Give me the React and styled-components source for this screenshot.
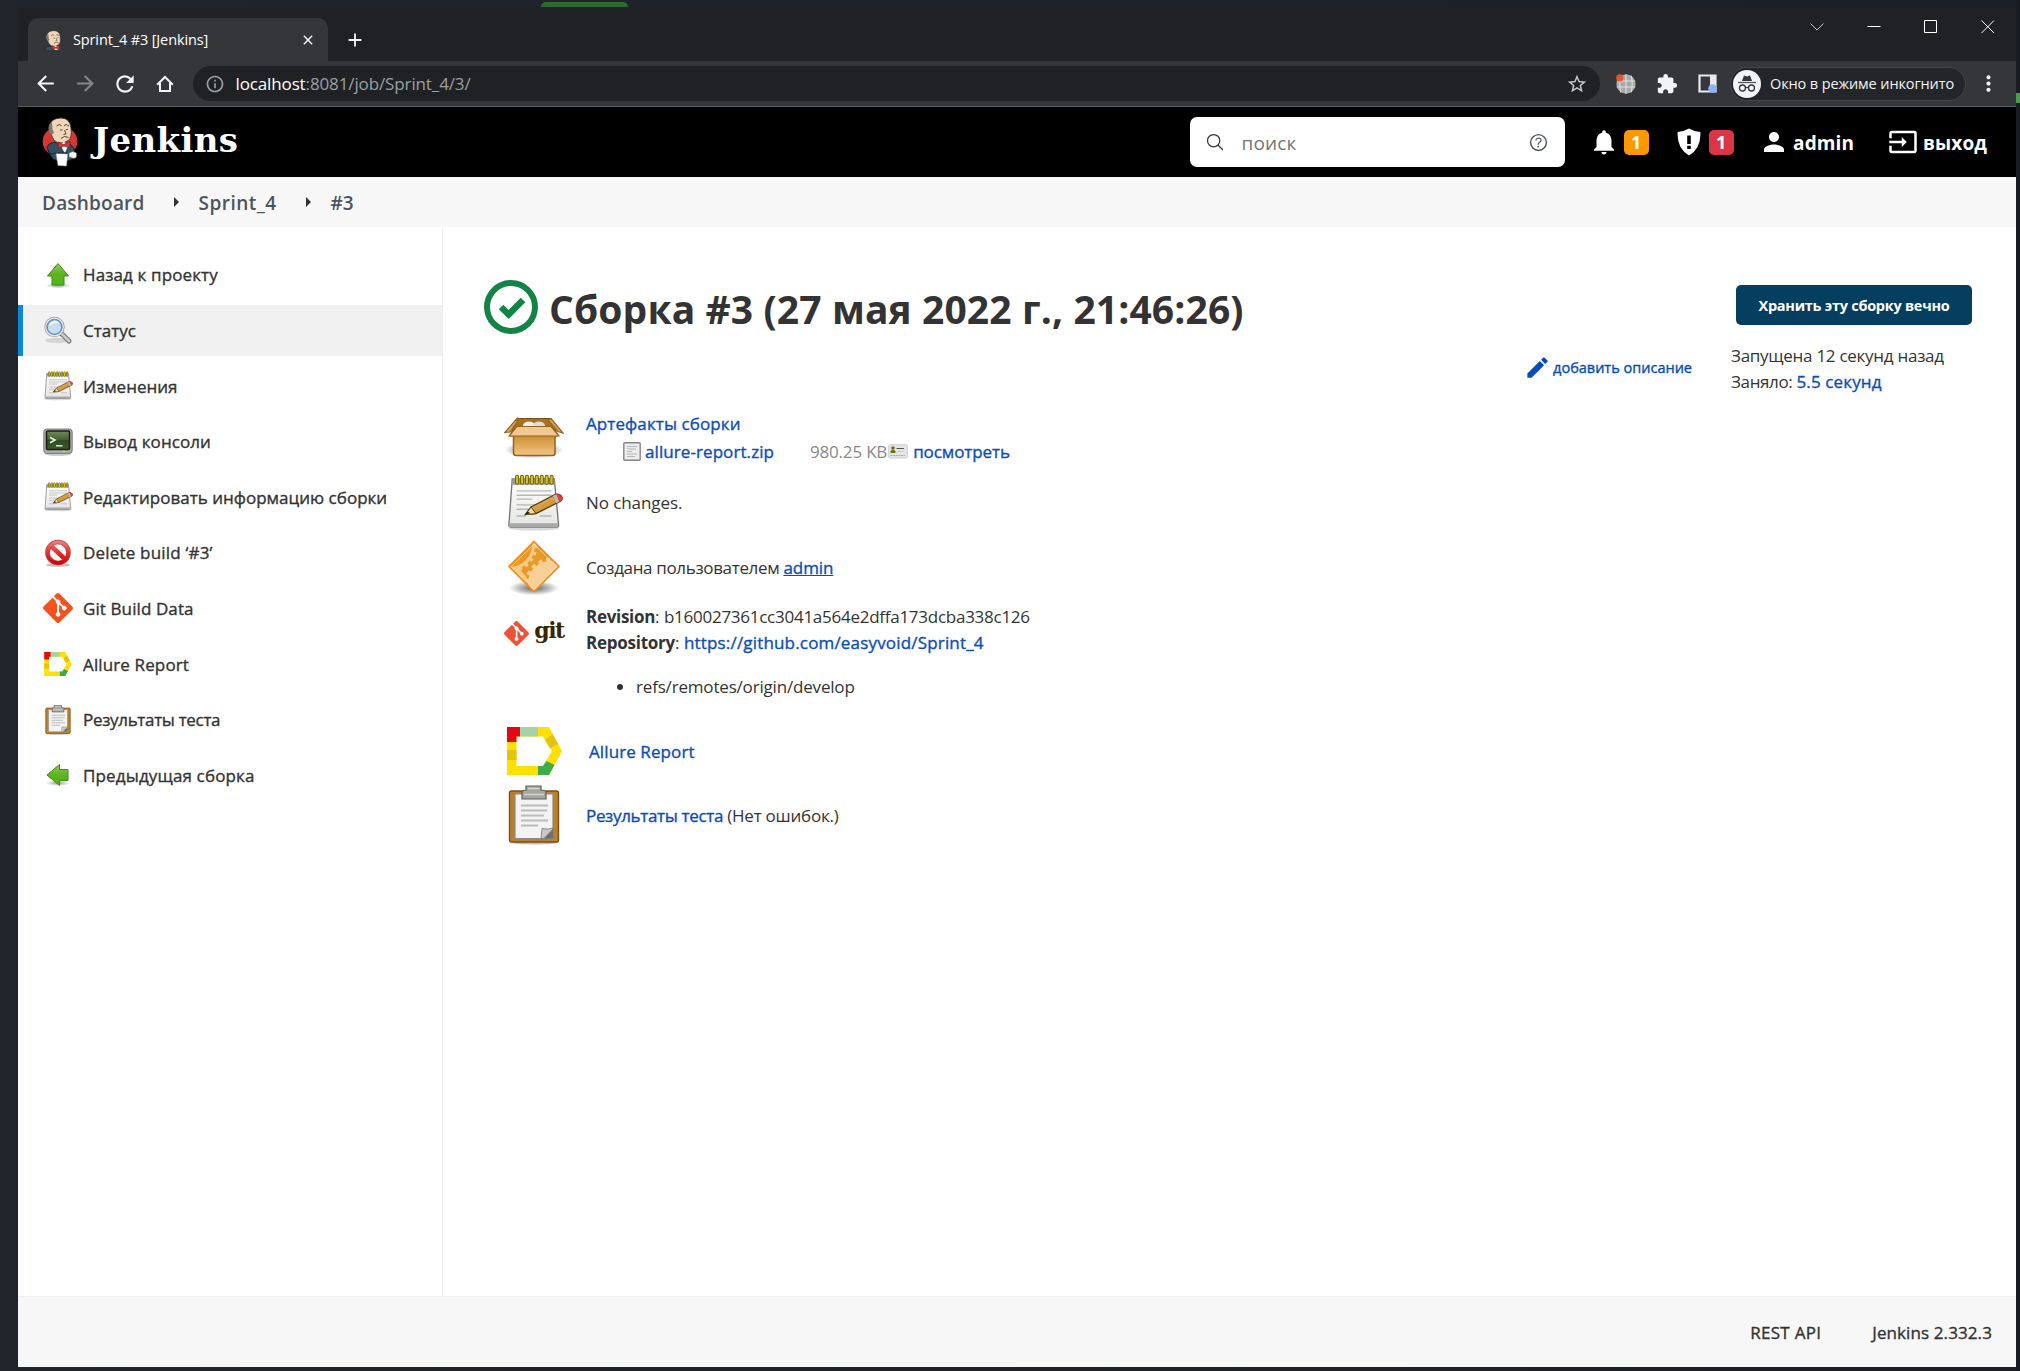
import React from "react";
import styled, { createGlobalStyle } from "styled-components";
import {
  MdArrowBack, MdArrowForward, MdRefresh, MdInfoOutline, MdStarBorder, MdExtension,
  MdMoreVert, MdNotifications, MdPerson, MdInput, MdEdit, MdClose, MdAdd,
} from "react-icons/md";
import { IoSearchOutline, IoHelpCircleOutline } from "react-icons/io5";
import { SiGit } from "react-icons/si";

const Global = createGlobalStyle`
  * { box-sizing: border-box; }
  body { margin: 0; background: #22272f; font-family: "Open Sans", "Noto Sans", sans-serif; }
  svg { display: block; flex: none; }
`;

const T = styled.span`
  white-space: pre;
  font-size: ${(p) => p.$s || 17}px;
  font-weight: ${(p) => p.$b || 400};
  color: ${(p) => p.$c || "inherit"};
  letter-spacing: ${(p) => p.$ls || 0}px;
  -webkit-text-stroke: ${(p) => (p.$b === 500 ? "0.35px" : "0")} currentColor;
`;

const Desktop = styled.div`
  width: 2020px;
  height: 1371px;
  padding: 8px 4px 4px 18px;
  background: linear-gradient(90deg, #22272f 0, #20242b 18px, #1c2026 2016px, #16191e 100%);
  overflow: hidden;
  position: relative;
`;
const TopSliver = styled.div`
  position: absolute; left: 541px; top: 2px; width: 87px; height: 5px;
  background: #2c6a31; border-radius: 8px 8px 0 0;
`;
const SideSliver = styled.div`
  position: absolute; right: 0; top: 93px; width: 4px; height: 10px; background: #4c9a4f;
`;
const Window = styled.div`
  width: 1998px; height: 1359px; display: flex; flex-direction: column; background: #fff;
`;
const TabStrip = styled.div`
  height: 53px; background: #202124; display: flex; padding: 10px 0 0 10px; color: #f1f3f4;
`;
const Tab = styled.div`
  width: 300px; height: 43px; background: #35363a; border-radius: 10px 10px 0 0;
  display: flex; align-items: center; padding: 0 12px 0 16px; gap: 11px; color: #fff;
  & > span { flex: 1; }
`;
const NewTab = styled.div`
  width: 54px; display: flex; align-items: center; justify-content: center;
`;
const WindowControls = styled.div`
  margin-left: auto; display: flex; align-items: flex-start; gap: 43px; padding: 2px 21px 0 0;
`;
const Toolbar = styled.div`
  height: 46px; background: #35363a; border-bottom: 1px solid #5a5b5e; display: flex;
  align-items: center; padding: 0 14px 0 15px; color: #f1f3f4;
`;
const NavButton = styled.div`
  width: ${(p) => p.$w || 40}px; display: flex; justify-content: ${(p) => (p.$w ? "flex-start" : "center")};
  color: ${(p) => (p.$dim ? "#85868a" : "#f1f3f4")};
`;
const Omnibox = styled.div`
  width: 1407px; height: 35px; border-radius: 18px; background: #202124; display: flex;
  align-items: center; padding: 0 12px; margin-left: 8px; color: #9aa0a6;
`;
const Url = styled.div`flex: 1; margin-left: 10.5px; padding-bottom: 1px;`;
const Extensions = styled.div`
  display: flex; align-items: center; gap: 20px; padding: 0 13px 0 16px;
`;
const Incognito = styled.div`
  width: 236px; height: 34px; border-radius: 17px; border: 1px solid #45464a; background: #242528; flex: none;
  display: flex; align-items: center; padding-left: 2px; gap: 9px; margin-right: 10px;
  & > span { padding-bottom: 1px; }
`;

const Header = styled.header`
  height: 70px; background: #000; color: #fff; display: flex; align-items: center; padding: 0 29px 0 24px;
`;
const Brand = styled.div`
  display: flex; align-items: center; gap: 15px; flex: 1;
`;
const BrandName = styled.span`
  font-family: "DejaVu Serif", serif; font-weight: 700; font-size: 34px; letter-spacing: 0.35px;
  line-height: 60px; padding-bottom: 4px;
`;
const Search = styled.div`
  width: 375px; height: 50px; border-radius: 7px; background: #fff; display: flex; align-items: center;
  padding: 0 14.5px 0 15px; margin-right: 24px; color: #333;
  & > span { flex: 1; margin-left: 17px; padding-top: 2px; }
`;
const HeaderItem = styled.div`
  display: flex; align-items: center; gap: ${(p) => p.$gap || 0}px; margin-right: ${(p) => p.$mr || 0}px;
  & > span:last-child:not(:first-child) { line-height: 25px; }
`;
const HeaderLabel = styled(T)`padding-top: 2px;`;
const Badge = styled.span`
  width: 25px; height: 25px; border-radius: 5px; background: ${(p) => p.$bg}; font-size: 18px; font-weight: 700;
  display: flex; align-items: center; justify-content: center;
`;

const Crumbs = styled.nav`
  height: 50px; background: #f7f7f7; display: flex; align-items: center; padding: 2px 0 0 24px; color: #4d545d;
`;
const CrumbArrow = styled.i`
  border: 5px solid transparent; border-left-color: #333; border-right: 0; margin: 0 20px 2px 29px;
`;

const Body = styled.div`flex: 1; display: flex; min-height: 0;`;
const Side = styled.aside`
  width: 425px; border-right: 1px solid #efefef; padding-top: 22.4px; display: flex; flex-direction: column; gap: 4.6px;
`;
const Task = styled.a`
  height: 51px; display: flex; align-items: center; gap: 10px; color: #333;
  padding-left: ${(p) => (p.$active ? 20 : 25)}px;
  border-left: ${(p) => (p.$active ? "5px solid #0b88d5" : "0")};
  background: ${(p) => (p.$active ? "#f1f1f1" : "transparent")};
`;
const TaskIcon = styled.span`width: 30px; flex: none; display: flex; justify-content: center;`;
const Main = styled.main`flex: 1; color: #333;`;
const MainHead = styled.div`height: 178px; display: flex; padding: 49px 44px 0 41px;`;
const TitleRow = styled.h1`
  margin: 0; height: 62px; display: flex; align-items: center; gap: 11px; flex: 1; font-size: 40px;
  & > span { padding-top: 2px; }
`;
const AddDescription = styled.a`
  color: #004db8; display: flex; align-items: center; gap: 2px; height: 30px; margin: 76px 39px 0 0;
`;
const BuildInfo = styled.div`width: 241px; padding-top: 9px; display: flex; flex-direction: column;`;
const KeepButton = styled.button`
  align-self: flex-end; margin: 0 0 18px; width: 236px; height: 40px; border: 0; border-radius: 5px; background: #063e60;
  color: #fff; font-family: inherit; padding: 0;
`;
const Line = styled.div`
  height: ${(p) => p.$h || 26.2}px; line-height: ${(p) => p.$h || 26.2}px; display: flex; align-items: center;
  margin: ${(p) => p.$mt || 0}px 0 0 ${(p) => p.$ml || 0}px;
`;
const Summary = styled.div`padding-left: 61px;`;
const SummaryRow = styled.div`
  height: ${(p) => p.$h}px; display: flex; align-items: ${(p) => (p.$top ? "flex-start" : "center")};
`;
const SummaryIcon = styled.div`
  width: 60px; height: 66px; margin-right: 22px; display: flex; align-items: center; justify-content: center;
`;
const SummaryText = styled.div`padding: ${(p) => p.$pt || 0}px 0 0 ${(p) => p.$pl || 0}px;`;
const Bullet = styled.i`width: 6px; height: 6px; border-radius: 50%; background: #333; margin-right: 13px;`;
const GitWord = styled.span`
  font-family: "DejaVu Serif", serif; font-weight: 700; font-size: 22px; letter-spacing: -1.5px; color: #362701;
  line-height: 30px; margin-top: -7px;
`;
const GitLogo = styled.div`display: flex; align-items: center; gap: 5px; color: #f05033;`;
const Gap = styled.span`width: ${(p) => p.$w}px; flex: none;`;
const Footer = styled.footer`
  height: 71px; border-top: 1px solid #efefef; background: #f7f7f7; display: flex; align-items: center;
  justify-content: flex-end; gap: 51px; padding: 1px 24px 0 0; color: #333;
`;

function Butler({ w, h, box = "0 0 36 50", disc = true }) {
  return (
    <svg width={w} height={h} viewBox={box}>
      {disc && <ellipse cx="18" cy="24.500" rx="17.300" ry="15.500" fill="#d33833" />}
      <path d="M5 30 Q7 25 14 25.500 L24 26 Q30 27 32.500 32 L31 42 Q20 47 11 42 Q6 36 5 30Z" fill="#335061" stroke="#101820" strokeWidth=".8" />
      <path d="M7 11 Q8 1 19 1 Q28 1 29 11 Q30 20 27 23 Q22 27 16 26 Q11 24 9.500 18Z" fill="#efd6b8" stroke="#3a2c22" strokeWidth=".8" />
      <path d="M6.500 11 Q7 6 10 6 L10.500 12 L12 16 L9 18 Q6.500 15 6.500 11Z" fill="#7d7a78" />
      <path d="M14.500 9 Q17 6.500 19.500 8.500 M22 8.500 Q24.500 6.500 27 9 M18 13h2.500 M24 12.500h2 M22.500 13 L24 17 L21.500 17.500 M19 21.500 Q22 18 26.500 20.500" fill="none" stroke="#49352a" strokeWidth=".9" />
      <path d="M18 27 L21 33 L23 36 L27 27 L22 25Z" fill="#eef2f4" />
      <path d="M16 25 L21.500 27.500 L28 24.500 L28 31 L22 29 L16.500 31.500Z" fill="#d33833" stroke="#4f1010" strokeWidth=".5" />
      <path d="M14 36 L25.500 37 L24.500 49 L16 48.500Z" fill="#fff" stroke="#aaa" strokeWidth=".5" />
      <path d="M27 36 Q31 33 34.500 36 Q35.500 41 32 41.500 L27 40Z" fill="#f4f4f4" stroke="#555" strokeWidth=".6" />
      <path d="M6 33 Q8 39 13 36 L25 36" fill="none" stroke="#14222b" strokeWidth="1" />
    </svg>
  );
}

function GreenArrow({ left }) {
  return (
    <svg width="30" height="30" viewBox="0 0 30 30">
      <defs>
        <linearGradient id="ga" x1="0" y1="0" x2="0" y2="1">
          <stop offset="0" stopColor="#8ccb55" /><stop offset=".5" stopColor="#5fb21f" /><stop offset="1" stopColor="#4cb80d" />
        </linearGradient>
        <radialGradient id="gs"><stop offset="0" stopColor="#000" stopOpacity=".4" /><stop offset="1" stopColor="#000" stopOpacity="0" /></radialGradient>
      </defs>
      <ellipse cx="15" cy={left ? 23 : 25.500} rx="12" ry="3" fill="url(#gs)" />
      <path d={left ? "M4 15 L16.500 4.500 V9.500 H25 V20.500 H16.500 V25.500Z" : "M15 3.500 L25.500 16 H21 V25 H9 V16 H4.500Z"} fill="url(#ga)" stroke="#3f8a1c" strokeWidth="1" />
    </svg>
  );
}

function Magnifier() {
  return (
    <svg width="30" height="30" viewBox="0 0 30 30">
      <ellipse cx="14" cy="25.500" rx="12" ry="2.500" fill="#000" opacity=".12" />
      <path d="M18.500 18.500 L26 26" stroke="#6f6f6f" strokeWidth="5" strokeLinecap="round" />
      <path d="M18.500 18.500 L26 26" stroke="#c9c9c9" strokeWidth="3" strokeLinecap="round" />
      <circle cx="11.500" cy="12" r="9" fill="#c7dcf2" stroke="#9a9a9a" strokeWidth="2.400" />
      <circle cx="11.500" cy="12" r="8.800" fill="none" stroke="#ececec" strokeWidth="1.200" />
      <circle cx="11.500" cy="12" r="7.300" fill="none" stroke="#5f8ac4" strokeWidth="1.300" />
      <path d="M6 11 A6 6 0 0 1 16 7.500 Q9 8 6 11Z" fill="#fff" opacity=".8" />
    </svg>
  );
}

function Notepad({ size }) {
  return (
    <svg width={size} height={size} viewBox="0 0 60 60">
      <defs>
        <linearGradient id="np" x1="0" y1="0" x2="0" y2="1"><stop offset="0" stopColor="#fff" /><stop offset="1" stopColor="#e4e4e2" /></linearGradient>
        <linearGradient id="pc" x1="0" y1="0" x2="1" y2="1"><stop offset="0" stopColor="#f0c870" /><stop offset="1" stopColor="#b87518" /></linearGradient>
      </defs>
      <ellipse cx="30" cy="56.500" rx="26" ry="2" fill="#000" opacity=".15" />
      <path d="M7.500 5 H51 L55.500 53 Q55.500 55 53.500 55 H5.500 Q4 55 4 53Z" fill="url(#np)" stroke="#777" strokeWidth="1.400" />
      <path d="M5 51 H55 L55 54.500 H4.500Z" fill="#a9a9a9" />
      <path d="M8 5 H51 L51.500 11 H7.500Z" fill="#9b9b98" />
      <path d="M12 17.500H48M12 22H48M12 26H28M12 32H44M12 36.500H36M12 43.500H22M36 43.500H48" stroke="#b5b5b5" strokeWidth="1.400" />
      <path d="M12.500 3v6M17.600 3v6M22.700 3v6M27.800 3v6M32.900 3v6M38 3v6M43.100 3v6M48.200 3v6" stroke="#6b6000" strokeWidth="4.200" strokeLinecap="round" />
      <path d="M12.500 3v6M17.600 3v6M22.700 3v6M27.800 3v6M32.900 3v6M38 3v6M43.100 3v6M48.200 3v6" stroke="#d5c02c" strokeWidth="2.300" strokeLinecap="round" />
      <path d="M21 42 L27 34 L52 21 Q57 20 59 24 Q60 27 57 28.500 L32 41Z" fill="url(#pc)" stroke="#4e3a12" strokeWidth="1.300" />
      <path d="M21 42 L27 34 L32 41Z" fill="#efd9a5" stroke="#4e3a12" strokeWidth="1" />
      <path d="M21 42 L23.500 38.500 L26 40.500Z" fill="#222" />
      <path d="M53 21 Q57 20 59 24 Q60 27 57 28.500 L55.500 29Z" fill="#ea3b3b" />
      <path d="M50 22.200 L53 21 L56 28.800 L53 30.300Z" fill="#b9b9b9" />
    </svg>
  );
}

function Terminal() {
  return (
    <svg width="30" height="30" viewBox="0 0 30 30">
      <defs><linearGradient id="tm" x1="0" y1="0" x2="0" y2="1"><stop offset="0" stopColor="#6f8a5c" /><stop offset=".45" stopColor="#4a6338" /><stop offset=".5" stopColor="#2f4a20" /><stop offset="1" stopColor="#3c5a2a" /></linearGradient></defs>
      <ellipse cx="15" cy="27" rx="13" ry="2" fill="#000" opacity=".2" />
      <rect x=".8" y="2" width="28.400" height="24.500" rx="3" fill="#a8aaa6" stroke="#7c7e7a" />
      <rect x="3.500" y="4" width="23" height="18.500" rx="1" fill="url(#tm)" stroke="#1b1f18" strokeWidth="1.500" />
      <path d="M7 10.500 L12 13 L7 15.700" fill="none" stroke="#d8f5d8" strokeWidth="1.600" />
      <path d="M13 18.800h6.500" stroke="#d8f5d8" strokeWidth="1.400" />
      <circle cx="21" cy="24.300" r="1" fill="#9be05a" />
    </svg>
  );
}

function Forbidden() {
  return (
    <svg width="30" height="30" viewBox="0 0 30 30">
      <defs><linearGradient id="fb" gradientUnits="userSpaceOnUse" x1="0" y1="2" x2="0" y2="27"><stop offset="0" stopColor="#e88" /><stop offset=".5" stopColor="#d33" /><stop offset="1" stopColor="#c00" /></linearGradient></defs>
      <ellipse cx="15" cy="27" rx="12" ry="1.800" fill="#000" opacity=".25" />
      <circle cx="15" cy="14.500" r="10.500" fill="#f6f6f6" />
      <path d="M7.500 7.500 L22.500 21.500" stroke="url(#fb)" strokeWidth="4.500" />
      <circle cx="15" cy="14.500" r="10.500" fill="none" stroke="#c23a3a" strokeWidth="4.600" />
      <circle cx="15" cy="14.500" r="10.500" fill="none" stroke="url(#fb)" strokeWidth="3.200" />
    </svg>
  );
}

function Allure({ w, h }) {
  return (
    <svg width={w} height={h} viewBox="0 0 55 48">
      <path d="M0 0 H42 L55 24 L42 48 H0Z M9.500 9.500 V39 H36 L45 24 L36 9.500Z" fillRule="evenodd" fill="#ffe000" />
      <path d="M0 0 H13 V9.500 H9.500 V15 H0Z" fill="#e30613" />
      <path d="M13 0H31V9.500H13Z" fill="#a8d2a5" />
      <path d="M0 23H9.500V33H0Z M38 13 L45.500 7.500 L51 17 L43 21.500Z" fill="#e0c40f" />
      <path d="M31 48 V39 H36 L39.500 34 L47.500 38 L42 48Z" fill="#3eab48" />
    </svg>
  );
}

function Clipboard({ w, h }) {
  return (
    <svg width={w} height={h} viewBox="0 0 52 60">
      <ellipse cx="26" cy="57.500" rx="24" ry="2" fill="#000" opacity=".25" />
      <rect x="1.500" y="6" width="49" height="51" rx="2" fill="#b9802e" stroke="#7a5114" strokeWidth="1.400" />
      <path d="M7 9 H45 V53.500 H7Z" fill="#f3f3f3" stroke="#8b8b8b" strokeWidth="1.200" />
      <path d="M13 20.500H40M13 25.500H39M13 30.500H36M13 35.500H40M13 40.500H30" stroke="#bcbcbc" strokeWidth="2" />
      <path d="M33 53.500 L34 43.500 Q40 45 45 43 V44 L36 53.500Z" fill="#c8cac6" stroke="#777" strokeWidth=".8" />
      <path d="M45 44 V53.500 H36Z" fill="#6f716d" />
      <path d="M14 14 V8 Q14 5 18 5 V1 H33 V5 Q38 5 38 8 V14Z" fill="#a5a79f" stroke="#5e605b" strokeWidth="1.200" />
      <path d="M20 3.500 H31.500 M16 9.500 H36" stroke="#d3d5cf" strokeWidth="1.600" />
    </svg>
  );
}

function Box() {
  return (
    <svg width="60" height="42" viewBox="0 0 60 42">
      <defs>
        <linearGradient id="bx" x1="0" y1="0" x2="0" y2="1"><stop offset="0" stopColor="#c98f35" /><stop offset=".5" stopColor="#dfa95b" /><stop offset="1" stopColor="#f0c58a" /></linearGradient>
        <radialGradient id="bs"><stop offset=".6" stopColor="#000" stopOpacity=".3" /><stop offset="1" stopColor="#000" stopOpacity="0" /></radialGradient>
      </defs>
      <ellipse cx="30" cy="33" rx="29" ry="8.500" fill="url(#bs)" />
      <path d="M13 1.500 H47 L54 19 H6Z" fill="#a8701e" stroke="#7d4f12" />
      <ellipse cx="25" cy="8.500" rx="6" ry="4" fill="#eee" /><ellipse cx="35" cy="8.500" rx="6" ry="4" fill="#ddd" />
      <path d="M9.500 18 H51 V36 Q51 38.500 48.500 38.500 H12 Q9.500 38.500 9.500 36Z" fill="url(#bx)" stroke="#96631c" strokeWidth="1.500" />
      <path d="M13 9.500 H47 L55 19 H5Z" fill="#f1c88f" stroke="#96631c" strokeWidth="1.200" />
      <path d="M13 1.500 L.800 15.500 L6 15 L13 5Z M47 1.500 L59 16 L54 14.500 L44 3Z" fill="#dca65a" stroke="#96631c" strokeWidth="1.200" />
    </svg>
  );
}

function GearDiamond() {
  return (
    <svg width="54" height="56" viewBox="0 0 54 56">
      <defs>
        <linearGradient id="gd" x1="0" y1="0" x2="1" y2="1"><stop offset="0" stopColor="#f0a93a" /><stop offset="1" stopColor="#e29422" /></linearGradient>
        <radialGradient id="gdS"><stop offset=".2" stopColor="#000" stopOpacity=".5" /><stop offset="1" stopColor="#000" stopOpacity="0" /></radialGradient>
        <clipPath id="gdC"><path d="M27 1.500 L52 26.500 L27 51.500 L2 26.500Z" /></clipPath>
      </defs>
      <ellipse cx="27" cy="48" rx="25" ry="7.500" fill="url(#gdS)" />
      <path d="M27 1.500 L52 26.500 L27 51.500 L2 26.500Z" fill="#e79a28" />
      <g clipPath="url(#gdC)">
        <circle cx="3" cy="5" r="23.500" fill="none" stroke="#f6c987" strokeWidth="3" />
        <circle cx="3" cy="5" r="26" fill="none" stroke="#f6c987" strokeWidth="3" strokeDasharray="3.500 3.500" />
        <path d="M2 26 L12 28 L20 38 L16 44Z" fill="#f6c987" />
        <circle cx="43" cy="43" r="22" fill="#f8cf95" />
        <circle cx="43" cy="43" r="23" fill="none" stroke="#f8cf95" strokeWidth="4" strokeDasharray="4 4" />
      </g>
      <path d="M27 1.500 L52 26.500 L27 51.500 L2 26.500Z" fill="none" stroke="#f58a1c" strokeWidth="1.600" />
      <path d="M27 4 L49.500 26.500 L27 49 L4.500 26.500Z" fill="none" stroke="#fce0b4" strokeWidth="1" opacity=".7" />
    </svg>
  );
}

const FileIcon = () => (
  <svg width="18" height="19" viewBox="0 0 18 19">
    <rect x=".8" y=".8" width="16.400" height="17.400" rx="1" fill="#ededed" stroke="#858585" strokeWidth="1.400" />
    <path d="M4 4.500H14M4 7H13M4 9.500H9M4 12H14M4 14.500H12" stroke="#b5b5b5" />
  </svg>
);
const CardIcon = () => (
  <svg width="20" height="15" viewBox="0 0 20 15">
    <rect x=".7" y=".7" width="18.600" height="13.300" rx="1" fill="#e6e6e6" stroke="#cfcfcf" />
    <circle cx="5" cy="4" r="1.800" fill="#8a5a20" /><path d="M2.500 9V7Q5 4.500 7.500 7V9Z" fill="#5c7a1a" />
    <path d="M8.500 4.500H16" stroke="#555" /><path d="M9 7.500H16" stroke="#ccc" /><path d="M2.500 11.500H17" stroke="#aaa" strokeDasharray="2 .6" />
  </svg>
);
const CheckCircle = () => (
  <svg width="54" height="54" viewBox="0 0 54 54">
    <circle cx="27" cy="27" r="24" fill="none" stroke="#138347" strokeWidth="6" />
    <path d="M17 27 L24.700 34.500 L39 20" fill="none" stroke="#138347" strokeWidth="6.500" />
  </svg>
);
const Shield = () => (
  <svg width="24" height="28" viewBox="0 0 24 28">
    <path d="M12 .5 Q17 3.500 23.300 4 Q24.500 20 12 27.500 Q-.5 20 .7 4 Q7 3.500 12 .5Z" fill="#fff" />
    <path d="M10.200 7.500h3.600v8.500h-3.600z M10.200 17.800h3.600v3.200h-3.600z" fill="#000" />
  </svg>
);
const HomeIcon = () => (
  <svg width="18" height="18" viewBox="0 0 18 18">
    <path d="M1.200 9.800 L9 2 L16.800 9.800 M4 8 V16 H14 V8" fill="none" stroke="#f1f3f4" strokeWidth="2" />
  </svg>
);
const GlobeIcon = () => (
  <svg width="20" height="20" viewBox="0 0 20 20">
    <circle cx="10" cy="10" r="9.700" fill="#a8a8a8" />
    <path d="M.8 7H19.200M.8 13H19.200M10 .3V19.700M5 1.500Q2.500 10 5 18.500M15 1.500Q17.500 10 15 18.500" fill="none" stroke="#dedede" strokeWidth="1.100" />
    <circle cx="3.800" cy="3.800" r="3.600" fill="#e0592a" />
  </svg>
);
const PanelIcon = () => (
  <svg width="19" height="19" viewBox="0 0 19 19">
    <path d="M1.500 1.500H17.500V17.500H1.500Z" fill="none" stroke="#e8eaed" strokeWidth="2.200" />
    <path d="M12 1H18V12H12Z" fill="#e8eaed" />
    <circle cx="14.500" cy="14.500" r="4.300" fill="#8ab4f8" />
  </svg>
);
const SpyIcon = () => (
  <svg width="28" height="28" viewBox="0 0 28 28">
    <circle cx="14" cy="14" r="14" fill="#f1f3f4" />
    <path d="M9 11 L11 5.500 L14 6.500 L17 5.500 L19 11Z" fill="#35363a" />
    <path d="M5 12.500H23" stroke="#55565a" strokeWidth="1.300" />
    <circle cx="9.500" cy="18" r="3" fill="none" stroke="#35363a" strokeWidth="1.300" /><circle cx="18.500" cy="18" r="3" fill="none" stroke="#35363a" strokeWidth="1.300" />
    <path d="M12.500 17.800Q14 16.800 15.500 17.800" fill="none" stroke="#35363a" strokeWidth="1.200" />
  </svg>
);
const Controls = () => (
  <WindowControls>
    <svg width="14" height="14" viewBox="0 0 14 14"><path d="M.5 3.500 L7 10 L13.500 3.500" fill="none" stroke="#c8c8c8" /></svg>
    <svg width="14" height="14" viewBox="0 0 14 14"><path d="M.5 6.500H13.500" stroke="#fff" /></svg>
    <svg width="14" height="14" viewBox="0 0 14 14"><path d="M.5 .5H12.500V12.500H.5Z" fill="none" stroke="#fff" /></svg>
    <svg width="14" height="14" viewBox="0 0 14 14"><path d="M.5 .5L13 13M13 .5L.5 13" stroke="#fff" /></svg>
  </WindowControls>
);

const TASKS = [
  ["Назад к проекту", <GreenArrow />, 0.12],
  ["Статус", <Magnifier />, 0],
  ["Изменения", <Notepad size={30} />, 0],
  ["Вывод консоли", <Terminal />, 0.085],
  ["Редактировать информацию сборки", <Notepad size={30} />, 0.02],
  ["Delete build ‘#3’", <Forbidden />, 0.19],
  ["Git Build Data", <SiGit size={30} color="#f4511e" />, 0.1],
  ["Allure Report", <Allure w={28} h={24} />, 0.127],
  ["Результаты теста", <Clipboard w={30} h={30} />, -0.32],
  ["Предыдущая сборка", <GreenArrow left />, 0.15],
];

const BLUE = "#0b4db8";

export default function App() {
  return (
    <Desktop>
      <Global />
      <TopSliver />
      <SideSliver />
      <Window>
        <TabStrip>
          <Tab>
            <Butler w={18} h={20} box="4 0 27 32" disc={false} />
            <T $s={14.5} $ls={-0.13}>Sprint_4 #3 [Jenkins]</T>
            <MdClose size={16} />
          </Tab>
          <NewTab><MdAdd size={22} /></NewTab>
          <Controls />
        </TabStrip>
        <Toolbar>
          <NavButton $w={32}><MdArrowBack size={25} /></NavButton>
          <NavButton $dim><MdArrowForward size={25} /></NavButton>
          <NavButton><MdRefresh size={26} /></NavButton>
          <NavButton><HomeIcon /></NavButton>
          <Omnibox>
            <MdInfoOutline size={20} />
            <Url><T $c="#fff" $ls={-0.13}>localhost</T><T $ls={-0.12}>:8081/job/Sprint_4/3/</T></Url>
            <MdStarBorder size={22} color="#c8cacd" />
          </Omnibox>
          <Extensions><GlobeIcon /><MdExtension size={22} /><PanelIcon /></Extensions>
          <Incognito><SpyIcon /><T $s={14.5} $ls={-0.12}>Окно в режиме инкогнито</T></Incognito>
          <MdMoreVert size={25} />
        </Toolbar>
        <Header>
          <Brand><Butler w={36} h={50} /><BrandName>Jenkins</BrandName></Brand>
          <Search>
            <IoSearchOutline size={20} />
            <T $s={19} $c="#757575" $ls={0.15}>поиск</T>
            <IoHelpCircleOutline size={23} color="#4d545d" />
          </Search>
          <HeaderItem $gap={5} $mr={28}><MdNotifications size={30} color="#fff" /><Badge $bg="#ff9800">1</Badge></HeaderItem>
          <HeaderItem $gap={8} $mr={25.5}><Shield /><Badge $bg="#dc3545">1</Badge></HeaderItem>
          <HeaderItem $gap={4} $mr={34}><MdPerson size={30} /><HeaderLabel $s={19} $b={700} $ls={0.1}>admin</HeaderLabel></HeaderItem>
          <HeaderItem $gap={5}><MdInput size={30} /><HeaderLabel $s={19} $b={700} $ls={0.1}>выход</HeaderLabel></HeaderItem>
        </Header>
        <Crumbs>
          <T $s={19} $b={600} $ls={0.2}>Dashboard</T><CrumbArrow />
          <T $s={19} $b={600} $ls={0.46}>Sprint_4</T><CrumbArrow />
          <T $s={19} $b={600}>#3</T>
        </Crumbs>
        <Body>
          <Side>
            {TASKS.map(([label, icon, ls], i) => (
              <Task key={label} $active={i === 1}><TaskIcon>{icon}</TaskIcon><T $b={500} $ls={ls}>{label}</T></Task>
            ))}
          </Side>
          <Main>
            <MainHead>
              <TitleRow><CheckCircle /><T $s={39} $b={700} $ls={0.11}>Сборка #3 (27 мая 2022 г., 21:46:26)</T></TitleRow>
              <AddDescription><MdEdit size={27} /><T $s={14.5} $b={500}>добавить описание</T></AddDescription>
              <BuildInfo>
                <KeepButton><T $s={14.5} $b={700} $ls={-0.258}>Хранить эту сборку вечно</T></KeepButton>
                <Line><T $ls={-0.27}>Запущена 12 секунд назад</T></Line>
                <Line><T $ls={-0.36}>Заняло: </T><T $b={500} $c={BLUE} $ls={0.12}>5.5 секунд</T></Line>
              </BuildInfo>
            </MainHead>
            <Summary>
              <SummaryRow $h={65}>
                <SummaryIcon><Box /></SummaryIcon>
                <SummaryText>
                  <Line $h={28}><T $b={500} $c={BLUE} $ls={0.1}>Артефакты сборки</T></Line>
                  <Line $h={28} $ml={37}>
                    <FileIcon /><Gap $w={4} /><T $b={500} $c={BLUE} $ls={0.08}>allure-report.zip</T><Gap $w={36} />
                    <T $c="#888" $ls={-0.2}>980.25 KB</T><Gap $w={1} /><CardIcon /><Gap $w={5} />
                    <T $b={500} $c={BLUE} $ls={-0.08}>посмотреть</T>
                  </Line>
                </SummaryText>
              </SummaryRow>
              <SummaryRow $h={65}><SummaryIcon><Notepad size={58} /></SummaryIcon><T $ls={-0.08}>No changes.</T></SummaryRow>
              <SummaryRow $h={65}>
                <SummaryIcon><GearDiamond /></SummaryIcon>
                <T $ls={-0.34}>Создана пользователем </T><T as="u" $b={500} $c={BLUE} $ls={-0.06}>admin</T>
              </SummaryRow>
              <SummaryRow $h={119} $top>
                <SummaryIcon><GitLogo><SiGit size={25} /><GitWord>git</GitWord></GitLogo></SummaryIcon>
                <SummaryText $pt={4}>
                  <Line><T $b={700} $ls={-0.3}>Revision</T><T>: </T><T $ls={-0.26}>b160027361cc3041a564e2dffa173dcba338c126</T></Line>
                  <Line><T $b={700} $ls={-0.248}>Repository</T><T>: </T><T $b={500} $c={BLUE} $ls={0.175}>https://github.com/easyvoid/Sprint_4</T></Line>
                  <Line $mt={17.6} $ml={31}><Bullet /><T $ls={-0.18}>refs/remotes/origin/develop</T></Line>
                </SummaryText>
              </SummaryRow>
              <SummaryRow $h={64}><SummaryIcon><Allure w={55} h={48} /></SummaryIcon><SummaryText $pl={3}><T $b={500} $c={BLUE} $ls={0.1}>Allure Report</T></SummaryText></SummaryRow>
              <SummaryRow $h={64}><SummaryIcon><Clipboard w={52} h={60} /></SummaryIcon><T $b={500} $c={BLUE} $ls={-0.333}>Результаты теста</T><T $ls={-0.22}> (Нет ошибок.)</T></SummaryRow>
            </Summary>
          </Main>
        </Body>
        <Footer><T $b={500} $ls={0.28}>REST API</T><T $b={500} $ls={0.1}>Jenkins 2.332.3</T></Footer>
      </Window>
    </Desktop>
  );
}
